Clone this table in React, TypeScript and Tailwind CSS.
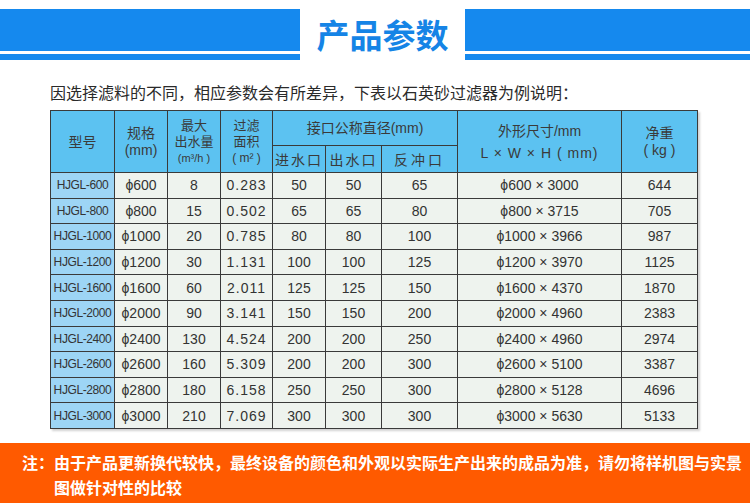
import React from "react";

const rows = [
  ["HJGL-600", "600", "8", "0.283", "50", "50", "65", "600", "3000", "644"],
  ["HJGL-800", "800", "15", "0.502", "65", "65", "80", "800", "3715", "705"],
  ["HJGL-1000", "1000", "20", "0.785", "80", "80", "100", "1000", "3966", "987"],
  ["HJGL-1200", "1200", "30", "1.131", "100", "100", "125", "1200", "3970", "1125"],
  ["HJGL-1600", "1600", "60", "2.011", "125", "125", "150", "1600", "4370", "1870"],
  ["HJGL-2000", "2000", "90", "3.141", "150", "150", "200", "2000", "4960", "2383"],
  ["HJGL-2400", "2400", "130", "4.524", "200", "200", "250", "2400", "4960", "2974"],
  ["HJGL-2600", "2600", "160", "5.309", "200", "200", "300", "2600", "5100", "3387"],
  ["HJGL-2800", "2800", "180", "6.158", "250", "250", "300", "2800", "5128", "4696"],
  ["HJGL-3000", "3000", "210", "7.069", "300", "300", "300", "3000", "5630", "5133"],
];

const cjk = { fontFamily: '"Noto Sans CJK SC", "Noto Sans", sans-serif' };
const latin = { fontFamily: '"Liberation Sans", "Noto Sans CJK SC", sans-serif' };

// base cell styles without size / colour so the modifiers don't clash
const th = "border border-[#3a3a3a] bg-[#5cc2f1] text-[#3a3a3a] font-normal text-center align-middle p-0 whitespace-nowrap";
const td = "border border-[#3a3a3a] text-[#333] text-center align-middle p-0 whitespace-nowrap leading-[24px]";
const num = td + " bg-[#eef3ee] text-[14px]";

function Bar() {
  return (
    <div className="flex flex-col gap-[3px]">
      <div className="h-[42px] bg-[#1589ee]" />
      <div className="h-[6px] bg-[#1589ee]" />
    </div>
  );
}

export default function App() {
  return (
    <div className="w-[750px] h-[503px] bg-white overflow-hidden flex flex-col" style={cjk}>
      {/* 标题 */}
      <div className="flex items-center pt-[9px]">
        <div className="w-[300px]"><Bar /></div>
        <div className="w-[165px] text-center text-[33px] font-bold text-[#1584e6] leading-[51px]">
          产品参数
        </div>
        <div className="flex-1"><Bar /></div>
      </div>

      <p className="mt-[20px] ml-[50px] text-[16px] leading-[24px] text-[#2a2a2a]">
        因选择滤料的不同，相应参数会有所差异，下表以石英砂过滤器为例说明：
      </p>

      {/* 参数表 */}
      <table className="mt-[6px] ml-[50px] w-[647px] border-collapse table-fixed shadow-[2px_2px_2px_rgba(0,0,0,0.18)]">
        <colgroup>
          <col className="w-[64px]" />
          <col className="w-[53px]" />
          <col className="w-[53px]" />
          <col className="w-[52px]" />
          <col className="w-[53px]" />
          <col className="w-[56px]" />
          <col className="w-[76px]" />
          <col className="w-[164px]" />
          <col className="w-[76px]" />
        </colgroup>
        <thead>
          <tr className="h-[35px]">
            <th rowSpan={2} className={th + " text-[14px] leading-[17px]"}>型号</th>
            <th rowSpan={2} className={th + " text-[14px] leading-[17px]"}>
              规格<br /><span style={latin}>(mm)</span>
            </th>
            <th rowSpan={2} className={th + " text-[13px] leading-[16px]"}>
              最大<br />出水量<br /><span style={latin} className="text-[11px]">(m³/h )</span>
            </th>
            <th rowSpan={2} className={th + " text-[13px] leading-[16px]"}>
              过滤<br />面积<br /><span style={latin} className="text-[12px]">( m² )</span>
            </th>
            <th colSpan={3} className={th + " text-[14px] leading-[17px]"}>
              接口公称直径<span style={latin}>(mm)</span>
            </th>
            <th rowSpan={2} className={th + " text-[14px] leading-[21px]"}>
              外形尺寸<span style={latin}>/mm</span>
              <br />
              <span style={latin} className="tracking-[1px]">L × W × H ( mm)</span>
            </th>
            <th rowSpan={2} className={th + " text-[14px] leading-[17px]"}>
              净重<br /><span style={latin}>( kg )</span>
            </th>
          </tr>
          <tr className="h-[27px]">
            <th className={th + " text-[14px] leading-[17px] tracking-[2px]"}>进水口</th>
            <th className={th + " text-[14px] leading-[17px] tracking-[2px]"}>出水口</th>
            <th className={th + " text-[14px] leading-[17px] tracking-[3px]"}>反冲口</th>
          </tr>
        </thead>
        <tbody style={latin}>
          {rows.map((r) => (
            <tr key={r[0]} className="h-[25.6px]">
              <td className={td + " bg-[#9dd5f5] text-[12px] tracking-[-0.4px]"}>{r[0]}</td>
              <td className={num}>ϕ{r[1]}</td>
              <td className={num}>{r[2]}</td>
              <td className={num + " tracking-[1px]"}>{r[3]}</td>
              <td className={num}>{r[4]}</td>
              <td className={num}>{r[5]}</td>
              <td className={num}>{r[6]}</td>
              <td className={num}>ϕ{r[7]} × {r[8]}</td>
              <td className={num}>{r[9]}</td>
            </tr>
          ))}
        </tbody>
      </table>

      {/* 注释 */}
      <div className="mt-auto h-[60px] bg-[#ff5a00] pt-[7px] pl-[54px] pr-[2px] text-white text-[16px] font-bold leading-[25px]">
        <p className="-indent-[32px]">
          注：由于产品更新换代较快，最终设备的颜色和外观以实际生产出来的成品为准，请勿将样机图与实景图做针对性的比较
        </p>
      </div>
    </div>
  );
}
